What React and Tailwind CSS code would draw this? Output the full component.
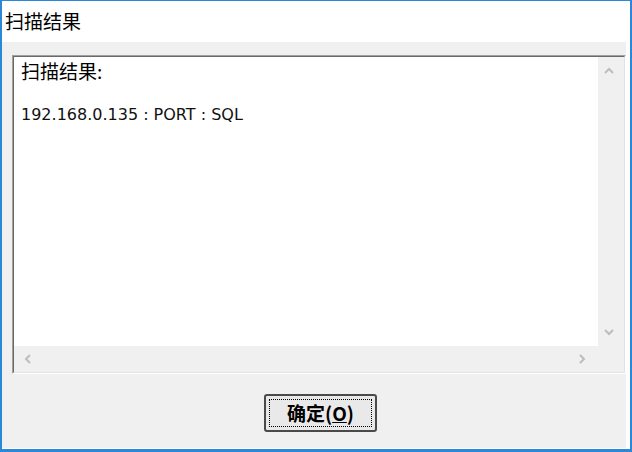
import React from 'react';

const cjk = { fontFamily: '"Noto Sans CJK SC", "Noto Sans", sans-serif' };

const Chevron = ({ dir }) => {
  const paths = {
    up: 'M2 7 L6 3 L10 7',
    down: 'M2 4 L6 8 L10 4',
    left: 'M7 2 L3 6 L7 10',
    right: 'M4 2 L8 6 L4 10',
  };
  return (
    <svg width="12" height="12" viewBox="0 0 12 12" fill="none">
      <path d={paths[dir]} stroke="#bdbdbd" strokeWidth="2" />
    </svg>
  );
};

const ResultDialog = () => {
  const results = ['192.168.0.135 : PORT : SQL'];

  return (
    <div className="w-[632px] h-[452px] bg-white border-t border-l-2 border-r-2 border-b-[3px] border-[#2b87d8] flex flex-col overflow-hidden">
      {/* title */}
      <div className="h-[41px] flex items-center pl-[3px] text-[19px] text-black" style={cjk}>
        扫描结果
      </div>

      <div className="flex-1 flex flex-col bg-[#f0f0f0] mr-[4px] mb-[1px]">
        {/* result box */}
        <div className="mt-[13px] ml-[10px] h-[319px] border-t border-l border-[#a0a0a0] border-r border-b border-r-white border-b-white">
          <div className="h-full flex flex-col border-t border-l border-[#696969] border-r border-b border-r-[#e3e3e3] border-b-[#e3e3e3]">
            <div className="flex flex-1 min-h-0">
              <div className="flex-1 bg-white pl-[7px] pt-[1px]">
                <div className="text-[19px] leading-[26px] text-black" style={cjk}>
                  扫描结果:
                </div>
                {results.map((line, index) => (
                  <div
                    key={index}
                    className="mt-[21px] text-[16px] leading-[20px] text-[#111]"
                    style={{ fontFamily: '"DejaVu Sans", sans-serif' }}
                  >
                    {line}
                  </div>
                ))}
              </div>
              <div className="w-[26px] bg-[#f0f0f0] flex flex-col items-center justify-between pt-[9px] pb-[8px] pr-[4px]">
                <Chevron dir="up" />
                <Chevron dir="down" />
              </div>
            </div>
            <div className="h-[26px] flex bg-[#f0f0f0]">
              <div className="flex-1 flex items-center justify-between pl-[9px] pr-[10px]">
                <Chevron dir="left" />
                <Chevron dir="right" />
              </div>
              <div className="w-[26px]" />
            </div>
          </div>
        </div>

        {/* button */}
        <div className="flex pl-[262px] mt-[20px]">
          <button className="w-[113px] h-[38px] rounded-[3px] border-2 border-[#4a4a4a] bg-[#e9e9e9] p-[3px]">
            <div
              className="h-full w-full border border-dotted border-black flex items-center justify-center text-[19px] font-bold text-black"
              style={cjk}
            >
              确定(<span className="underline">O</span>)
            </div>
          </button>
        </div>
      </div>
    </div>
  );
};

export default function App() {
  return <ResultDialog />;
}
